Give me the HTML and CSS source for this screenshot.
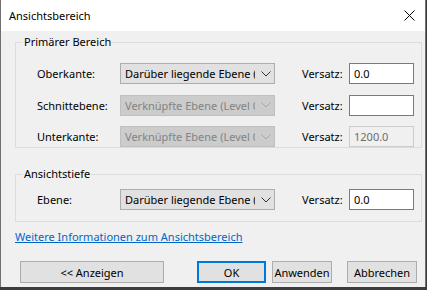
FILE: index.html
```html
<!DOCTYPE html>
<html lang="de">
<head>
    <meta charset="UTF-8">
    <title>Ansichtsbereich</title>
    <link rel="stylesheet" href="styles.css">
</head>
<body>

<div class="window">
    <div class="titlebar">
        <span class="title">Ansichtsbereich</span>
        <svg class="close" width="11" height="11" viewBox="0 0 11 11">
            <path d="M0.5 0.5 L10.5 10.5 M10.5 0.5 L0.5 10.5" stroke="#000" stroke-width="1" fill="none"/>
        </svg>
    </div>

    <div class="content">
        <fieldset class="group first">
            <legend>Primärer Bereich</legend>
            <div class="rows">
                <label>Oberkante:</label>
                <div class="combo">
                    <span class="combo-text">Darüber liegende Ebene (Level 1)</span>
                    <svg class="chev" width="10" height="6" viewBox="0 0 10 6"><path d="M0.5 0.5 L5 5 L9.5 0.5" stroke="#333" fill="none"/></svg>
                </div>
                <label class="off">Versatz:</label>
                <input class="field" type="text" value="0.0">

                <label>Schnittebene:</label>
                <div class="combo disabled">
                    <span class="combo-text">Verknüpfte Ebene (Level 0 I</span>
                    <svg class="chev" width="10" height="6" viewBox="0 0 10 6"><path d="M0.5 0.5 L5 5 L9.5 0.5" stroke="#a8a8a8" fill="none"/></svg>
                </div>
                <label class="off">Versatz:</label>
                <input class="field" type="text" value="">

                <label>Unterkante:</label>
                <div class="combo disabled">
                    <span class="combo-text">Verknüpfte Ebene (Level 0 I</span>
                    <svg class="chev" width="10" height="6" viewBox="0 0 10 6"><path d="M0.5 0.5 L5 5 L9.5 0.5" stroke="#a8a8a8" fill="none"/></svg>
                </div>
                <label class="off">Versatz:</label>
                <input class="field disabled" type="text" value="1200.0" disabled>
            </div>
        </fieldset>

        <fieldset class="group second">
            <legend>Ansichtstiefe</legend>
            <div class="rows">
                <label>Ebene:</label>
                <div class="combo">
                    <span class="combo-text">Darüber liegende Ebene (Level 1)</span>
                    <svg class="chev" width="10" height="6" viewBox="0 0 10 6"><path d="M0.5 0.5 L5 5 L9.5 0.5" stroke="#333" fill="none"/></svg>
                </div>
                <label class="off">Versatz:</label>
                <input class="field" type="text" value="0.0">
            </div>
        </fieldset>

        <a class="link" href="#">Weitere Informationen zum Ansichtsbereich</a>

        <div class="buttons">
            <button class="btn wide">&lt;&lt; Anzeigen</button>
            <div class="right">
                <button class="btn ok">OK</button>
                <button class="btn apply">Anwenden</button>
                <button class="btn cancel">Abbrechen</button>
            </div>
        </div>
    </div>
</div>

</body>
</html>
```

FILE: styles.css
```css
html, body {
    margin: 0;
    padding: 0;
}
body {
    width: 427px;
    height: 290px;
    background-color: #3c3c3c;
    font-family: "Noto Sans", "Open Sans", sans-serif;
    font-size: 11px;
    color: #000;
    overflow: hidden;
}
.window {
    width: 424px;
    height: 287px;
    background-color: #f0f0f0;
    border-left: 1px solid #707070;
    border-right: 1px solid #707070;
    display: flex;
    flex-direction: column;
}
.titlebar {
    height: 31px;
    background-color: #fff;
    display: flex;
    align-items: center;
    justify-content: space-between;
    padding: 0 10px 0 8px;
}
.title {
    font-size: 11px;
    margin-top: -1px;
}
.close {
    margin-top: -1px;
}
.content {
    padding: 3px 3px 0 14px;
    display: flex;
    flex-direction: column;
}
.group {
    margin: 0;
    border: 1px solid #dcdcdc;
    padding: 0 7px 0 21px;
    min-width: 0;
}
.group legend {
    padding: 0 1px;
    margin-left: -14px;
    line-height: 16px;
}
.group.first {
    padding-top: 13px;
    padding-bottom: 0;
}
.group.second {
    margin-top: 18px;
    padding-top: 7px;
    padding-bottom: 11px;
}
.rows {
    display: grid;
    grid-template-columns: 83px 155px 74px 65px;
    row-gap: 10.5px;
    align-items: center;
}
.rows label {
    white-space: nowrap;
}
.rows .off {
    padding-left: 27px;
}
.combo {
    height: 21px;
    box-sizing: border-box;
    border: 1px solid #adadad;
    background-color: #e1e1e1;
    display: flex;
    align-items: center;
    padding: 0 3px 0 4px;
}
.combo-text {
    flex: 1;
    overflow: hidden;
    white-space: nowrap;
}
.chev {
    margin-left: 6px;
    flex: none;
}
.combo.disabled {
    background-color: #cccccc;
    border-color: #bfbfbf;
    color: #838383;
}
.field {
    height: 21px;
    box-sizing: border-box;
    width: 65px;
    border: 1px solid #7a7a7a;
    background-color: #fff;
    font-family: inherit;
    font-size: 11px;
    padding: 0 4px;
    margin: 0;
    outline: none;
}
.field.disabled {
    background-color: #f0f0f0;
    border-color: #cccccc;
    color: #6d6d6d;
}
.link {
    color: #0066cc;
    margin-top: 6px;
    align-self: flex-start;
    line-height: 17px;
}
.buttons {
    display: flex;
    justify-content: space-between;
    margin-top: 16px;
    padding: 0 5px 0 5px;
}
.right {
    display: flex;
}
.btn {
    height: 22px;
    box-sizing: border-box;
    border: 1px solid #adadad;
    background-color: #e1e1e1;
    font-family: inherit;
    font-size: 11px;
    color: #000;
    padding: 0;
    width: 70px;
}
.btn.wide {
    width: 144px;
}
.btn.ok {
    border: 2px solid #0078d7;
    width: 69px;
}
.btn.apply {
    width: 60px;
    margin-left: 6px;
}
.btn.cancel {
    margin-left: 15px;
}
```
